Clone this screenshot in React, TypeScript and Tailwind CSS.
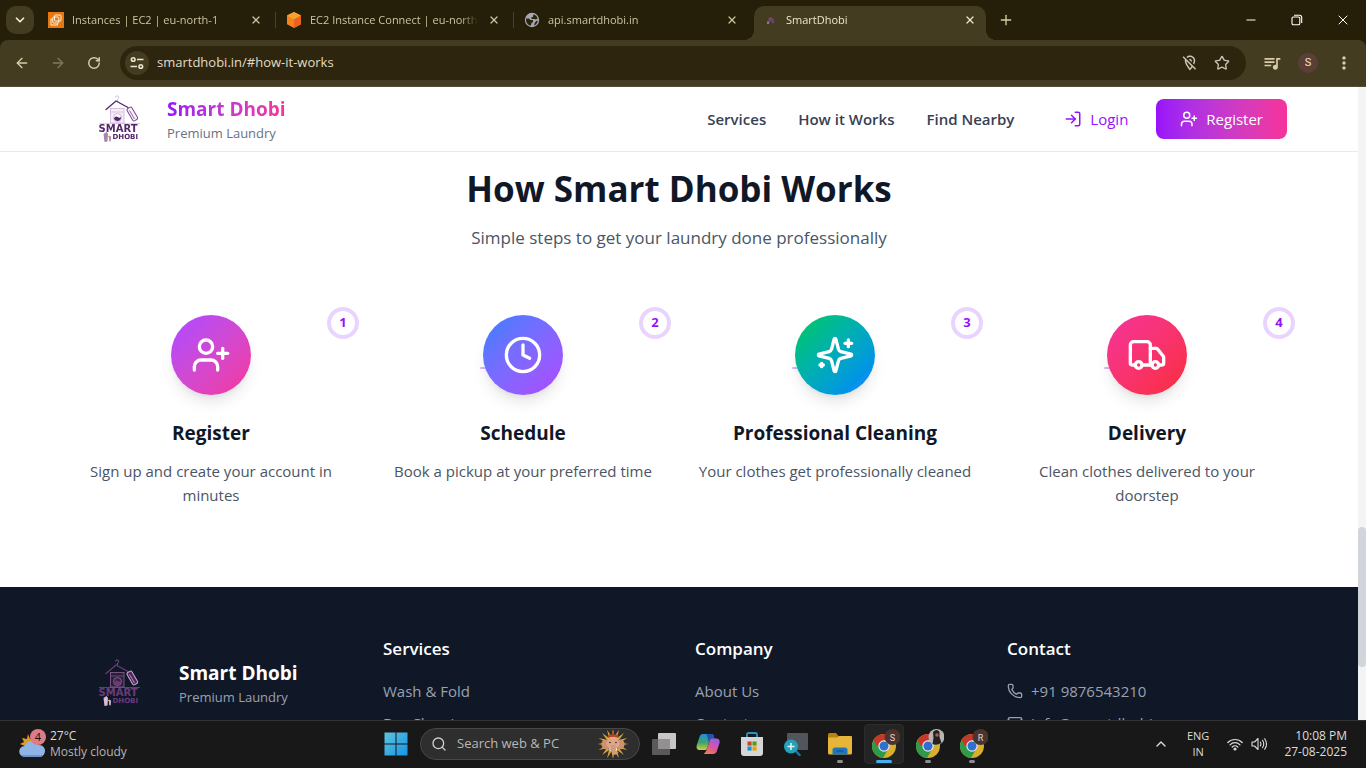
import type { ReactNode } from "react";
import {
  ArrowLeft,
  ArrowRight,
  ChevronDown,
  ChevronUp,
  Clock,
  LogIn,
  Mail,
  Minus,
  Phone,
  Plus,
  RotateCw,
  Search,
  Star,
  Truck,
  UserPlus,
  X,
} from "lucide-react";
import { MdQueueMusic, MdOutlineLocationOff, MdMoreVert } from "react-icons/md";

/* ---------- Drawings ---------- */

function SparklesIcon({ className }: { className?: string }) {
  return (
    <svg viewBox="0 0 24 24" fill="none" stroke="currentColor" strokeWidth="2" strokeLinecap="round" strokeLinejoin="round" className={className} aria-hidden="true">
      <path d="M9.937 15.5A2 2 0 0 0 8.5 14.063l-6.135-1.582a.5.5 0 0 1 0-.962L8.5 9.936A2 2 0 0 0 9.937 8.5l1.582-6.135a.5.5 0 0 1 .963 0L14.063 8.5A2 2 0 0 0 15.5 9.937l6.135 1.581a.5.5 0 0 1 0 .964L15.5 14.063a2 2 0 0 0-1.437 1.437l-1.582 6.135a.5.5 0 0 1-.963 0z" />
      <path d="M20 3v4M22 5h-4M4 17v2M5 18H3" />
    </svg>
  );
}

function Logo({ dark = false }: { dark?: boolean }) {
  const ink = dark ? "#6b3a78" : "#54266b";
  const soft = dark ? "#8a6296" : "#cdb2d6";
  const tag = dark ? "#d3a9d8" : "#7b4a90";
  return (
    <svg viewBox="0 0 96 96" className="-my-4 size-24 shrink-0" role="img" aria-label="Smart Dhobi logo">
      <path d="M44.500 26.500a1.600 1.600 0 1 1 2 1.500v2" fill="none" stroke={soft} strokeWidth=".8" />
      <path d="M35 38.500l10-8.500 12 6.500" fill="none" stroke={ink} strokeWidth="1.300" strokeLinecap="round" />
      <rect x="39.500" y="37.500" width="13.500" height="14.500" fill={dark ? "#2b2038" : "#f5edf7"} stroke={soft} strokeWidth=".8" />
      <path d="M39.500 41h13.500" stroke={soft} strokeWidth=".6" />
      <circle cx="46.500" cy="46.500" r="4" fill={dark ? "#3c2748" : "#fff"} stroke={soft} strokeWidth=".9" />
      <path d="M42.800 47.300q2-2.800 4-1.300t3.500-.6q-.4 4.300-3.800 4.600-3-.1-3.700-2.700z" fill={ink} />
      <rect x="58.500" y="36" width="5.600" height="14" rx="1.600" transform="rotate(-30 61.300 43)" fill={dark ? "#4b2b58" : "#f7effa"} stroke={tag} strokeWidth="1" />
      <path d="M58.500 39.500l5 8.500" stroke={tag} strokeWidth=".8" />
      <path d="M28 52.500h41" stroke={soft} strokeWidth=".6" />
      <text x="27.500" y="60.800" fontFamily="DejaVu Sans, sans-serif" fontWeight="700" fontSize="10" fill={ink}>SMART</text>
      <text x="41.500" y="68.300" fontFamily="DejaVu Sans, sans-serif" fontWeight="700" fontSize="7" fill={ink}>DHOBI</text>
      <path d="M32.500 63l3-2 1.500 2-.5 7.500-3 .5zM38 64.500l2 1-.3 5-1.500-.5z" fill={dark ? "#d6bcdc" : "#a485b2"} />
      <circle cx="37.800" cy="65.500" r=".8" fill="#e7a64a" />
    </svg>
  );
}

function Ec2Icon() {
  return (
    <svg viewBox="0 0 16 16" className="size-4 shrink-0" aria-hidden="true">
      <rect width="16" height="16" fill="#e67711" />
      <g fill="none" stroke="#fff1df" strokeWidth="1">
        <rect x="6.500" y="3" width="6.500" height="6" rx="1" />
        <rect x="4.800" y="5" width="6" height="6" rx="1" />
        <path d="M4.500 7H3v6h6.500v-1.700" />
      </g>
    </svg>
  );
}

function CubeIcon() {
  return (
    <svg viewBox="0 0 16 16" className="size-4 shrink-0" aria-hidden="true">
      <path d="M8 0l7 3.600v8.600L8 16l-7-3.800V3.600z" fill="#f58220" />
      <path d="M8 0l7 3.600L8 7.500 1 3.600z" fill="#fba02d" />
      <path d="M8 7.500l7-3.900v8.600L8 16z" fill="#e8641b" />
    </svg>
  );
}

function GlobeIcon() {
  return (
    <svg viewBox="0 0 16 16" className="size-4 shrink-0" aria-hidden="true">
      <circle cx="8" cy="8" r="7.200" fill="#a5a8b0" />
      <path d="M2.200 6.500H5L6.500 8H9v2.500H7.500V12l-1 1.800A6 6 0 0 1 2.200 6.500z" fill="#2a2410" />
      <path d="M9.500 2.200a6 6 0 0 1 4.200 4L12 7.500l-2-.5H7.500V5H9z" fill="#2a2410" />
      <path d="M13.800 8.500A6 6 0 0 1 10 13.500l.8-3 1.700-1.500z" fill="#2a2410" />
    </svg>
  );
}

function DhobiFavicon() {
  return (
    <svg viewBox="0 0 16 16" className="size-4 shrink-0" aria-hidden="true">
      <path d="M5.500 7l2.500-2 3 1 1.500 5-2 .4L9 8.500l-2 3H4.500L7 8z" fill="#6c4761" />
      <path d="M5 9.500h2V12H5z" fill="#98718b" />
    </svg>
  );
}

function SiteControlsIcon() {
  return (
    <svg viewBox="0 0 16 16" className="size-4" fill="none" stroke="currentColor" strokeWidth="1.600" aria-hidden="true">
      <circle cx="4.200" cy="4.500" r="1.800" />
      <path d="M8 4.500h6.500M1.500 11.500H8" />
      <circle cx="11.800" cy="11.500" r="1.800" />
    </svg>
  );
}

function WeatherIcon() {
  return (
    <svg viewBox="0 0 30 30" className="size-[30px] shrink-0" aria-hidden="true">
      <path d="M10 5l2 5 6 2-3 8H8l-1-3-5-2 4-2-2-4 5 1z" fill="#e29a22" />
      <path d="M7 28a5.500 5.500 0 0 1-.5-11A7.500 7.500 0 0 1 20 16a6 6 0 0 1 2 12z" fill="#8fb4e6" />
      <path d="M7 28a5.500 5.500 0 0 1-4-2h22a6 6 0 0 1-3 2z" fill="#6d92d2" />
      <circle cx="20" cy="8" r="8" fill="#dd7c86" />
      <text x="20" y="12" textAnchor="middle" fontSize="11" fontFamily="Open Sans, sans-serif" fill="#111">4</text>
    </svg>
  );
}

function WindowsIcon() {
  return (
    <svg viewBox="0 0 24 24" className="size-6" aria-hidden="true">
      <defs>
        <linearGradient id="win" x1="0" y1="0" x2="1" y2="1" gradientUnits="objectBoundingBox">
          <stop offset="0" stopColor="#5cc5dc" />
          <stop offset="1" stopColor="#1793e8" />
        </linearGradient>
      </defs>
      <path d="M.5.500h11v11H.5zM12.500.500h11v11h-11zM.5 12.500h11v11H.5zM12.500 12.500h11v11h-11z" fill="url(#win)" />
    </svg>
  );
}

function GaneshaIcon() {
  const rays = Array.from({ length: 16 }, (_, i) => (i * 360) / 16);
  return (
    <svg viewBox="0 0 32 28" className="h-7 w-8 shrink-0" aria-hidden="true">
      {rays.map((a) => (
        <path key={a} d="M16-1.500l1.600 9h-3.200z" fill="#d5a53a" transform={`rotate(${a} 16 14)`} />
      ))}
      <path d="M10 10.500C5 9 3.500 13 5 16.500s4 3.500 6 1zM22 10.500c5-1.500 6.500 2.500 5 6s-4 3.500-6 1z" fill="#cf8f72" />
      <ellipse cx="16" cy="13.500" rx="6.500" ry="6.500" fill="#dfa789" />
      <path d="M13.500 15h5c0 5 1 7 3 7-1 3-6 4-7 0z" fill="#d39a7c" />
      <path d="M10.500 8l1.500-4 2 2 2-5 2 5 2-2 1.500 4q-5.500-2-11 0z" fill="#b8402d" />
      <path d="M10.500 8.500q5.500-2.500 11 0" stroke="#e4b944" fill="none" />
      <circle cx="13" cy="12.500" r=".8" fill="#3a1e18" />
      <circle cx="19" cy="12.500" r=".8" fill="#3a1e18" />
      <path d="M12 18l2 3M20 18l-1 3" stroke="#fff2dc" strokeWidth="1" />
    </svg>
  );
}

function TaskViewIcon() {
  return (
    <svg viewBox="0 0 24 24" className="size-6" aria-hidden="true">
      <rect x="6" y="1" width="18" height="16" rx="1" fill="#c9c6c8" />
      <rect x="0" y="7" width="18" height="16" rx="1" fill="#5a5a5a" />
      <path d="M6 7h12v10H6z" fill="#929092" />
    </svg>
  );
}

function CopilotIcon() {
  return (
    <svg viewBox="0 0 24 24" className="size-6" aria-hidden="true">
      <defs>
        <linearGradient id="cpa" x1="0" y1="0" x2="0" y2="1">
          <stop offset="0" stopColor="#1f8fd8" />
          <stop offset=".55" stopColor="#3fa46b" />
          <stop offset="1" stopColor="#d5cb3a" />
        </linearGradient>
        <linearGradient id="cpb" x1="0" y1="1" x2=".6" y2="0">
          <stop offset="0" stopColor="#f08a4b" />
          <stop offset=".5" stopColor="#dc5a93" />
          <stop offset="1" stopColor="#a25ae0" />
        </linearGradient>
      </defs>
      <path d="M7 2h8.500c1.500 0 2 1 2.300 2.200L18.500 7H14l-3 9.500C10.500 18 10 18 8.500 18H4c-3 0-4-2-3.200-5L3.500 5C4.200 3 5 2 7 2z" fill="url(#cpa)" />
      <path d="M10.500 2h5c1.500 0 2 1 2.300 2.200L18.500 7H14l-1.500 2.500z" fill="#2352ae" />
      <path d="M11 22h6c2 0 3-1 3.700-2.500l2.700-8c.8-3-.2-5-3.200-5H16.500c-1.500 0-2 .2-2.500 1.500L10.500 18c-.7 2-1.500 3-3 3.500 1 .5 2 .5 3.500.5z" fill="url(#cpb)" />
    </svg>
  );
}

function StoreIcon() {
  return (
    <svg viewBox="0 0 24 24" className="size-6" aria-hidden="true">
      <path d="M7 6V2.500Q7 1 8.500 1h7Q17 1 17 2.500V6" fill="none" stroke="#2594cd" strokeWidth="1.800" />
      <path d="M1 5h22v16q0 3-3 3H4q-3 0-3-3z" fill="#d6d6d6" />
      <path d="M7.500 9.500H11.600V13.600H7.500z" fill="#c8461f" />
      <path d="M12.500 9.500h4.100v4.100h-4.100z" fill="#5c971b" />
      <path d="M7.500 14.500h4.100v4.100H7.500z" fill="#1495d3" />
      <path d="M12.500 14.500h4.100v4.100h-4.100z" fill="#e3a40c" />
    </svg>
  );
}

function MagnifierAppIcon() {
  return (
    <svg viewBox="0 0 24 24" className="size-6" aria-hidden="true">
      <rect x="3" y="1" width="21" height="17" rx="1" fill="#51565d" />
      <path d="M11 18l4.500 5" stroke="#1c75a5" strokeWidth="2.500" strokeLinecap="round" />
      <circle cx="7" cy="14.500" r="7" fill="#25a2b8" />
      <path d="M7 11v7M3.500 14.500h7" stroke="#e4f4f7" strokeWidth="1.500" />
    </svg>
  );
}

function FolderIcon() {
  return (
    <svg viewBox="0 0 24 24" className="size-6" aria-hidden="true">
      <path d="M0 2.500Q0 1 1.500 1H8l2.500 3H24v6H0z" fill="#b98313" />
      <path d="M0 5.500h9L11.500 4H22q2 0 2 2v15q0 1.500-1.500 1.500h-21Q0 22.500 0 21z" fill="#e6b53a" />
      <path d="M4.500 22.500V18q0-2.500 2.500-2.500h10q2.500 0 2.500 2.500v4.500z" fill="#1f76bf" />
      <path d="M8.500 19h7" stroke="#10528f" strokeWidth="1.200" />
    </svg>
  );
}

function ChromeIcon({ badge }: { badge: "S" | "R" | "photo" }) {
  return (
    <svg viewBox="0 0 32 32" className="size-8" aria-hidden="true">
      <circle cx="16" cy="18" r="12" fill="#d9b02c" />
      <path d="M16 18L5.600 12a12 12 0 0 0 9.400 18l5.500-9.500z" fill="#2f9a49" />
      <path d="M5.600 12a12 12 0 0 1 20.800 0H16v6h-7z" fill="#c9372c" />
      <circle cx="16" cy="18" r="5.700" fill="#e8e8ea" />
      <circle cx="16" cy="18" r="4.500" fill="#2f6fd0" />
      {badge === "photo" ? (
        <g>
          <circle cx="24.500" cy="9" r="8" fill="#b9b5b3" />
          <path d="M21 4q4-4 6.500 0v5l2 6q-5 3-9 1l1-6z" fill="#26211f" />
          <circle cx="25" cy="7" r="1.800" fill="#8a6a58" />
        </g>
      ) : (
        <g>
          <circle cx="24.500" cy="9" r="8" fill="#4b332e" />
          <text x="24.500" y="12.500" textAnchor="middle" fontSize="9" fontFamily="Roboto, sans-serif" fill="#e0d6d2">{badge}</text>
        </g>
      )}
    </svg>
  );
}

function WifiIcon() {
  return (
    <svg viewBox="0 0 16 16" className="size-4" fill="none" stroke="currentColor" strokeWidth="1.200" strokeLinecap="round" aria-hidden="true">
      <path d="M.8 6.500a10.200 10.200 0 0 1 14.400 0M3 8.800a7 7 0 0 1 10 0M5.200 11a4 4 0 0 1 5.600 0" />
      <circle cx="8" cy="13" r="1" fill="currentColor" />
    </svg>
  );
}

function SpeakerIcon() {
  return (
    <svg viewBox="0 0 17 16" className="h-4 w-[17px]" fill="none" stroke="currentColor" strokeWidth="1.100" strokeLinecap="round" strokeLinejoin="round" aria-hidden="true">
      <path d="M1 6h2.500L7 2.500v11L3.500 10H1zM9.300 6q1.200 2 0 4M11.500 4.300q2.500 3.700 0 7.400M13.700 2.700q3.700 5.300 0 10.600" />
    </svg>
  );
}

/* ---------- Browser window ---------- */

function Tab({ icon, title, active = false, divider = false }: { icon: ReactNode; title: string; active?: boolean; divider?: boolean }) {
  return (
    <div className="relative mr-[6px] flex w-[232px] shrink-0">
      <div
        className={
          active
            ? "flex min-w-0 flex-1 items-center gap-2 rounded-t-[10px] bg-[#443c21] px-2 pb-1.5 text-[#ece5d0]"
            : "flex min-w-0 flex-1 items-center gap-2 px-2 pb-1.5 text-[#cdc4a0]"
        }
      >
        {icon}
        <span className="min-w-0 flex-1 overflow-hidden whitespace-nowrap [mask-image:linear-gradient(to_right,black_90%,transparent)]">{title}</span>
        <button aria-label={`Close ${title}`} className="flex size-4 items-center justify-center">
          <X className="size-3" strokeWidth={2.5} />
        </button>
      </div>
      {divider && <span className="absolute top-1.5 -right-1 h-4 w-px bg-[#4a4127]" />}
      {active && (
        <>
          <span className="absolute bottom-0 -left-2.5 size-2.5 bg-[radial-gradient(circle_at_0_0,transparent_10px,#443c21_10px)]" />
          <span className="absolute -right-2.5 bottom-0 size-2.5 bg-[radial-gradient(circle_at_100%_0,transparent_10px,#443c21_10px)]" />
        </>
      )}
    </div>
  );
}

function TabStrip() {
  return (
    <div className="flex h-10 shrink-0 bg-[#251e08] pt-[6px] text-[11px] leading-4">
      <button aria-label="Search tabs" className="mr-[6px] ml-[6px] flex size-7 shrink-0 items-center justify-center rounded-[10px] bg-[#443c21] text-[#f0ead6]">
        <ChevronDown className="size-3.5" strokeWidth={3} />
      </button>
      <div className="flex min-w-0">
        <Tab icon={<Ec2Icon />} title="Instances | EC2 | eu-north-1" divider />
        <Tab icon={<CubeIcon />} title="EC2 Instance Connect | eu-north-1" divider />
        <Tab icon={<GlobeIcon />} title="api.smartdhobi.in" />
        <Tab icon={<DhobiFavicon />} title="SmartDhobi" active />
      </div>
      <button aria-label="New tab" className="flex size-7 shrink-0 items-center justify-center text-[#d8cda6]">
        <Plus className="size-4" />
      </button>
      <div className="-mt-[6px] ml-auto flex text-white">
        <button aria-label="Minimize" className="flex w-[46px] items-center justify-center"><Minus className="size-3.5" strokeWidth={1.7} /></button>
        <button aria-label="Restore" className="flex w-[46px] items-center justify-center">
          <svg viewBox="0 0 12 12" className="size-3" fill="none" stroke="currentColor" strokeWidth="1.100">
            <rect x="1" y="3" width="7.800" height="7.800" rx="1.300" />
            <path d="M3 1.300h5.500q2.200 0 2.200 2.200V9" />
          </svg>
        </button>
        <button aria-label="Close window" className="flex w-[46px] items-center justify-center"><X className="size-4" strokeWidth={1.5} /></button>
      </div>
    </div>
  );
}

function Toolbar() {
  return (
    <div className="shrink-0 bg-[#251e08]">
      <div className="flex h-[47px] items-center rounded-t-lg border-b border-[#544c35] bg-[#443c21] pr-2.5 pl-2.5 text-[#d8cda6]">
        <button aria-label="Back" className="mr-3 flex size-6 items-center justify-center"><ArrowLeft className="size-4" /></button>
        <button aria-label="Forward" className="mr-3 flex size-6 items-center justify-center text-[#817958]"><ArrowRight className="size-4" /></button>
        <button aria-label="Reload" className="mr-3.5 flex size-6 items-center justify-center"><RotateCw className="size-3.5" strokeWidth={2.5} /></button>
        <div className="flex h-[34px] min-w-0 flex-1 items-center rounded-full bg-[#2d250e] pr-3 pl-[5px]">
          <button aria-label="View site information" className="mr-2 flex size-6 shrink-0 items-center justify-center rounded-full bg-[#443c21] text-[#ece5d0]"><SiteControlsIcon /></button>
          <input aria-label="Address" defaultValue="smartdhobi.in/#how-it-works" className="min-w-0 flex-1 bg-transparent text-[13px] text-[#e2dcc8] outline-none" />
          <button aria-label="Location blocked" className="flex size-8 items-center justify-center text-[#cbc5b5]"><MdOutlineLocationOff className="size-[18px]" /></button>
          <button aria-label="Bookmark this tab" className="-mr-1 flex size-8 items-center justify-center text-[#cbc5b5]"><Star className="size-4" /></button>
        </div>
        <button aria-label="Media controls" className="ml-3.5 flex size-6 items-center justify-center"><MdQueueMusic className="size-5" /></button>
        <button aria-label="Profile" className="ml-3.5 flex size-5 items-center justify-center rounded-full bg-[#5b3f37] font-['Roboto',sans-serif] text-[11px] text-[#ece5d0]">S</button>
        <button aria-label="Menu" className="ml-3.5 flex size-6 items-center justify-center"><MdMoreVert className="size-5" /></button>
      </div>
    </div>
  );
}

/* ---------- Site ---------- */

const steps = [
  { n: 1, title: "Register", text: "Sign up and create your account in minutes", icon: <UserPlus className="size-10" />, tint: "from-purple-500 to-pink-500" },
  { n: 2, title: "Schedule", text: "Book a pickup at your preferred time", icon: <Clock className="size-10" />, tint: "from-blue-500 to-purple-500" },
  { n: 3, title: "Professional Cleaning", text: "Your clothes get professionally cleaned", icon: <SparklesIcon className="size-10" />, tint: "from-green-500 to-blue-500" },
  { n: 4, title: "Delivery", text: "Clean clothes delivered to your doorstep", icon: <Truck className="size-10" />, tint: "from-pink-500 to-red-500" },
];

function SiteHeader() {
  return (
    <header className="sticky top-0 z-20 border-b border-[#ebe8f3] bg-white">
      <div className="mx-auto flex h-16 max-w-7xl items-center justify-between px-8">
        <a href="#home" className="flex items-center">
          <Logo />
          <span>
            <span className="block w-fit bg-linear-to-r from-purple-600 to-pink-500 bg-clip-text text-[19px] leading-7 font-bold text-transparent">Smart Dhobi</span>
            <span className="block text-[13px] leading-5 text-gray-500">Premium Laundry</span>
          </span>
        </a>
        <nav className="flex items-center text-[15px]">
          <div className="mr-[34px] flex gap-8 font-semibold text-gray-700">
            <a href="#services">Services</a>
            <a href="#how-it-works">How it Works</a>
            <a href="#find-nearby">Find Nearby</a>
          </div>
          <a href="#login" className="mr-3 flex items-center gap-2 px-4 font-medium text-purple-600"><LogIn className="size-[18px]" />Login</a>
          <a href="#register" className="flex h-10 items-center gap-2 rounded-lg bg-linear-to-r from-purple-600 to-pink-500 px-6 font-medium text-white"><UserPlus className="size-[18px]" />Register</a>
        </nav>
      </div>
    </header>
  );
}

function HowItWorks() {
  return (
    <section id="how-it-works" className="-mt-[65px] bg-white py-20">
      <div className="mx-auto max-w-7xl px-8">
        <div className="mb-16 text-center">
          <h2 className="mb-3.5 text-[35px] leading-11 font-bold text-gray-900">How Smart Dhobi Works</h2>
          <p className="text-[17px] leading-[26px] text-gray-600">Simple steps to get your laundry done professionally</p>
        </div>
        <ol className="grid grid-cols-4 gap-8">
          {steps.map((s) => (
            <li key={s.n} className="relative text-center">
              <span className="absolute -top-2 -right-2 flex size-8 items-center justify-center rounded-full border-4 border-purple-200 bg-white text-[13px] font-bold text-purple-600">{s.n}</span>
              {s.n > 1 && <span className="absolute top-13 left-1/2 -ml-[43px] h-[2px] w-6 rounded-full bg-purple-300" />}
              <div className={`relative mx-auto mb-6 flex size-20 items-center justify-center rounded-full bg-linear-to-br text-white shadow-lg ${s.tint}`}>{s.icon}</div>
              <h3 className="mb-3 text-[19px] leading-7 font-bold text-gray-900">{s.title}</h3>
              <p className="text-[15px] leading-6 text-gray-600">{s.text}</p>
            </li>
          ))}
        </ol>
      </div>
    </section>
  );
}

function FooterLinks({ title, links }: { title: string; links: string[] }) {
  return (
    <div>
      <h4 className="mb-4 text-[17px] leading-7 font-semibold text-white">{title}</h4>
      <ul className="space-y-2">
        {links.map((l) => (
          <li key={l}><a href="#footer">{l}</a></li>
        ))}
      </ul>
    </div>
  );
}

function SiteFooter() {
  return (
    <footer id="footer" className="bg-gray-900 py-12 text-[15px] leading-6 text-gray-400">
      <div className="mx-auto grid max-w-7xl grid-cols-4 gap-8 px-8">
        <div className="flex items-center gap-3 self-start py-4">
          <Logo dark />
          <div>
            <div className="text-[19px] leading-7 font-bold text-white">Smart Dhobi</div>
            <div className="text-[13px] leading-5">Premium Laundry</div>
          </div>
        </div>
        <FooterLinks title="Services" links={["Wash & Fold", "Dry Cleaning"]} />
        <FooterLinks title="Company" links={["About Us", "Contact"]} />
        <div>
          <h4 className="mb-4 text-[17px] leading-7 font-semibold text-white">Contact</h4>
          <ul className="space-y-2">
            <li className="flex items-center gap-2"><Phone className="size-4" />+91 9876543210</li>
            <li className="flex items-center gap-2"><Mail className="size-4" />info@smartdhobi.com</li>
          </ul>
        </div>
      </div>
    </footer>
  );
}

/* ---------- Taskbar ---------- */

function TaskbarApp({ label, running = "none", children }: { label: string; running?: "none" | "idle" | "active"; children: ReactNode }) {
  return (
    <button
      aria-label={label}
      className={
        running === "active"
          ? "relative flex size-10 items-center justify-center rounded border border-[#2b2b2b] bg-[#242424]"
          : "relative flex size-10 items-center justify-center"
      }
    >
      {children}
      {running === "idle" && <span className="absolute bottom-px h-[3px] w-1.5 rounded-full bg-[#8e8e8e]" />}
      {running === "active" && <span className="absolute bottom-0 h-[3px] w-4 rounded-full bg-[#45b0ec]" />}
    </button>
  );
}

function Taskbar() {
  return (
    <div className="grid h-12 shrink-0 grid-cols-[1fr_auto_1fr] items-center border-t border-[#333333] bg-[#181818] pb-0.5 pl-0.5 text-[12px] text-[#dcdcdc]">
      <button className="flex items-center gap-[2px] justify-self-start pl-4 text-left leading-4">
        <WeatherIcon />
        <span>
          <span className="block">27°C</span>
          <span className="block text-[#b4b4b4]">Mostly cloudy</span>
        </span>
      </button>
      <div className="flex items-center gap-1">
        <TaskbarApp label="Start"><WindowsIcon /></TaskbarApp>
        <label className="flex h-8 w-[220px] items-center rounded-full border border-[#474747] bg-[#2e2e2e] px-2.5">
          <Search className="mr-2.5 size-4 text-[#cfcfcf]" />
          <input aria-label="Search web & PC" placeholder="Search web & PC" className="min-w-0 flex-1 bg-transparent text-[13px] outline-none placeholder:text-[#b8b8b8]" />
          <GaneshaIcon />
        </label>
        <TaskbarApp label="Task view"><TaskViewIcon /></TaskbarApp>
        <TaskbarApp label="Copilot"><CopilotIcon /></TaskbarApp>
        <TaskbarApp label="Microsoft Store"><StoreIcon /></TaskbarApp>
        <TaskbarApp label="Remote search"><MagnifierAppIcon /></TaskbarApp>
        <TaskbarApp label="File Explorer" running="idle"><FolderIcon /></TaskbarApp>
        <TaskbarApp label="Chrome profile S" running="active"><ChromeIcon badge="S" /></TaskbarApp>
        <TaskbarApp label="Chrome profile photo" running="idle"><ChromeIcon badge="photo" /></TaskbarApp>
        <TaskbarApp label="Chrome profile R" running="idle"><ChromeIcon badge="R" /></TaskbarApp>
      </div>
      <div className="flex items-center justify-self-end pr-[19px] leading-4">
        <button aria-label="Hidden icons" className="mr-[18px]"><ChevronUp className="size-4" /></button>
        <span className="mr-[18px] text-center text-[11px]">ENG<br />IN</span>
        <WifiIcon />
        <span className="mr-4 ml-2"><SpeakerIcon /></span>
        <span className="text-right">10:08 PM<br />27-08-2025</span>
      </div>
    </div>
  );
}

export default function App() {
  return (
    <div className="flex h-screen flex-col overflow-hidden font-['Open_Sans','Noto_Sans',sans-serif]">
      <TabStrip />
      <Toolbar />
      <div className="flex min-h-0 flex-1">
        <main className="min-w-0 flex-1 overflow-hidden bg-gray-900">
          <SiteHeader />
          <HowItWorks />
          <SiteFooter />
        </main>
        <div className="flex w-2 shrink-0 flex-col bg-gray-100">
          <div className="flex-[440]" />
          <div className="flex-[140] rounded-full bg-gray-300" />
          <div className="flex-[53]" />
        </div>
      </div>
      <Taskbar />
    </div>
  );
}
